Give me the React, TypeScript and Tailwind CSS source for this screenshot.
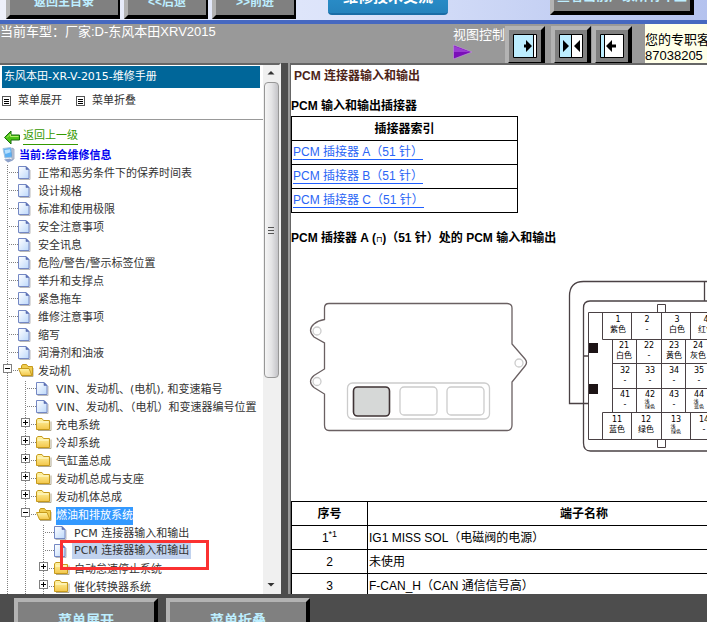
import React from 'react';

interface TreeNode {
  label: string;
  type: 'page' | 'folder' | 'open';
  state?: 'selected' | 'current';
  children?: TreeNode[];
}

interface Pin {
  no: string;
  color: string;
  x: number;
  y: number;
}

const page = (label: string, state?: TreeNode['state']): TreeNode => ({ label, type: 'page', state });
const folder = (label: string): TreeNode => ({ label, type: 'folder' });

const TREE: TreeNode[] = [
  page('正常和恶劣条件下的保养时间表'),
  page('设计规格'),
  page('标准和使用极限'),
  page('安全注意事项'),
  page('安全讯息'),
  page('危险/警告/警示标签位置'),
  page('举升和支撑点'),
  page('紧急拖车'),
  page('维修注意事项'),
  page('缩写'),
  page('润滑剂和油液'),
  {
    label: '发动机',
    type: 'open',
    children: [
      page('VIN、发动机、(电机), 和变速箱号'),
      page('VIN、发动机、（电机）和变速器编号位置'),
      folder('充电系统'),
      folder('冷却系统'),
      folder('气缸盖总成'),
      folder('发动机总成与支座'),
      folder('发动机体总成'),
      {
        label: '燃油和排放系统',
        type: 'open',
        state: 'selected',
        children: [
          page('PCM 连接器输入和输出'),
          page('PCM 连接器输入和输出', 'current'),
          folder('自动怠速停止系统'),
          folder('催化转换器系统'),
        ],
      },
    ],
  },
];

const CONNECTORS = ['PCM 插接器 A（51 针）', 'PCM 插接器 B（51 针）', 'PCM 插接器 C（51 针）'];

const TERMINALS = [
  { no: '1', note: '*1', name: 'IG1 MISS SOL（电磁阀的电源）' },
  { no: '2', name: '未使用' },
  { no: '3', name: 'F-CAN_H（CAN 通信信号高）' },
];

const PINS: Pin[] = [
  { no: '1', color: '紫色', x: 327, y: 60 },
  { no: '2', color: '-', x: 356, y: 60 },
  { no: '3', color: '白色', x: 386, y: 60 },
  { no: '4', color: '红色', x: 415, y: 60 },
  { no: '21', color: '白色', x: 333, y: 86 },
  { no: '22', color: '-', x: 358, y: 86 },
  { no: '23', color: '黄色', x: 383, y: 86 },
  { no: '24', color: '灰色', x: 407, y: 86 },
  { no: '32', color: '-', x: 334, y: 111 },
  { no: '33', color: '-', x: 359, y: 111 },
  { no: '34', color: '-', x: 383, y: 111 },
  { no: '35', color: '-', x: 408, y: 111 },
  { no: '41', color: '-', x: 334, y: 135 },
  { no: '42', color: '浅绿色', x: 359, y: 135 },
  { no: '43', color: '-', x: 383, y: 135 },
  { no: '44', color: '浅蓝色', x: 408, y: 135 },
  { no: '11', color: '蓝色', x: 326, y: 160 },
  { no: '12', color: '绿色', x: 355, y: 160 },
  { no: '13', color: '浅绿色', x: 385, y: 160 },
  { no: '14', color: '-', x: 413, y: 160 },
];

const PageIcon = () => (
  <svg width="16" height="18" viewBox="0 0 16 18" className="shrink-0">
    <defs>
      <linearGradient id="sheet" x1="0" y1="0" x2="1" y2="1">
        <stop offset="0" stopColor="#ffffff" />
        <stop offset="1" stopColor="#bcd8fb" />
      </linearGradient>
    </defs>
    <path d="M1.500 14.500h10.500V5" fill="none" stroke="#b9b9b9" />
    <path d="M.5 1.500H8L11 4.500v9H.5z" fill="url(#sheet)" stroke="#7488c4" />
    <path d="M8 1.500V4.500h3z" fill="#5a6fb4" stroke="#5a6fb4" strokeWidth=".6" />
  </svg>
);

const FolderIcon = ({ open }: { open?: boolean }) => (
  <svg width="18" height="18" viewBox="0 0 18 18" className="shrink-0">
    <defs>
      <linearGradient id="manila" x1="0" y1="0" x2="0" y2="1">
        <stop offset="0" stopColor="#fff6a8" />
        <stop offset="1" stopColor="#f3c64a" />
      </linearGradient>
    </defs>
    {open ? (
      <>
        <path d="M4 13.500h11V5" fill="none" stroke="#b0a890" />
        <path d="M3.500 3l1-1.500h4L10 3.500h4.500v9h-11z" fill="#f0cd50" stroke="#c69a1c" />
        <path d="M.5 5.500h10.500l3 7H3.500z" fill="url(#manila)" stroke="#c69a1c" />
      </>
    ) : (
      <>
        <path d="M2 13.500h13V4.500" fill="none" stroke="#b0a890" />
        <path d="M.5 12.500V3l1.200-1.500H6L7.500 3.500h6v9z" fill="url(#manila)" stroke="#c69a1c" />
        <path d="M1.500 5h11" stroke="#fffbd6" />
      </>
    )}
  </svg>
);

const Rail = ({ branch, box }: { branch?: boolean; box?: 'plus' | 'minus' }) => (
  <svg width="18" height="18" viewBox="0 0 18 18" className="shrink-0">
    <path d="M7.500 0v18" stroke="#808080" strokeDasharray="1 1" />
    {branch && <path d="M9 7.500h9" stroke="#808080" strokeDasharray="1 1" />}
    {box && (
      <>
        <rect x="3.500" y="1.500" width="8" height="8" fill="#fff" stroke="#808080" />
        <path d="M5 5.500h5" stroke="#000" />
        {box === 'plus' && <path d="M7.500 3v5" stroke="#000" />}
      </>
    )}
  </svg>
);

const labelStyles = {
  none: '',
  selected: 'bg-[#3399ff] text-white',
  current: '-mx-0.5 bg-[#c1d2ee] px-0.5 leading-4',
};

const TreeItem: React.FC<{ node: TreeNode; depth: number }> = ({ node, depth }) => {
  const box = node.type === 'open' ? 'minus' : node.type === 'folder' ? 'plus' : undefined;

  return (
    <li>
      <div className="relative flex h-[18px] whitespace-nowrap">
        {Array.from({ length: depth }).map((_, i) => (
          <Rail key={i} />
        ))}
        <Rail branch box={box} />
        <span className="w-5 shrink-0">
          {node.type === 'page' ? <PageIcon /> : <FolderIcon open={node.type === 'open'} />}
        </span>
        <a href="#" className={`self-start ${labelStyles[node.state ?? 'none']}`}>{node.label}</a>
        {node.state === 'current' && (
          <span className="absolute -top-[3px] left-[60px] z-10 h-[30px] w-[149px] border-[3px] border-[#fb3131]" />
        )}
      </div>
      {node.children && (
        <ul>
          {node.children.map((child, i) => (
            <TreeItem key={i} node={child} depth={depth + 1} />
          ))}
        </ul>
      )}
    </li>
  );
};

const MenuIcon = () => (
  <svg width="10" height="10" viewBox="0 0 10 10" className="shrink-0">
    <rect x=".5" y=".5" width="8" height="9" fill="#fff" stroke="#555" />
    <path d="M2 3.500h5M2 5.500h5M2 7.500h5" stroke="#000" />
  </svg>
);

const Scrollbar = () => (
  <div className="flex w-4 shrink-0 flex-col items-center bg-[#f0f0f0] text-black">
    <svg width="16" height="17" viewBox="0 0 16 17">
      <path d="M4.500 9.500L8 6l3.500 3.500z" fill="#333" />
    </svg>
    <div className="flex h-[296px] w-[15px] items-center justify-center rounded-sm border border-[#979797] bg-linear-to-r from-[#f5f5f5] via-[#e4e4e6] to-[#c4c4c8]">
      <svg width="8" height="8" viewBox="0 0 8 8">
        <path d="M1 1.500h6M1 4.500h6M1 7.500h6" stroke="#555" />
      </svg>
    </div>
    <svg width="16" height="17" viewBox="0 0 16 17" className="mt-auto">
      <path d="M4.500 6L8 9.500 11.500 6z" fill="#333" />
    </svg>
  </div>
);

const Sidebar = () => (
  <aside className="flex w-[281px] shrink-0 border-t-2 border-r-2 border-t-[#666] border-r-[#f0f0f0] bg-white font-['DejaVu_Sans','Noto_Sans_CJK_SC',sans-serif] text-[11px] leading-[18px] text-[#333]">
    <div className="min-w-0 flex-1 overflow-hidden">
      <h1 className="mt-px mr-[3px] ml-0.5 h-[22px] bg-[#069] px-0.5 leading-[22px] text-white">东风本田-XR-V-2015-维修手册</h1>
      <div className="flex h-8 items-center gap-3.5 border-b border-[#999] pb-1.5 pl-0.5">
        <a href="#" className="flex items-center gap-1.5"><MenuIcon />菜单展开</a>
        <a href="#" className="flex items-center gap-1.5"><MenuIcon />菜单折叠</a>
      </div>
      <div className="flex h-[25px] items-end pl-1">
        <svg width="19" height="16" viewBox="0 0 19 16">
          <path d="M.5 8.500L7 2v4h8.500v5H7v4z" fill="#4cc417" stroke="#176b0c" />
          <path d="M3 8.500L6.500 5v2.500h8" fill="none" stroke="#b5ef6b" />
        </svg>
        <a href="#" className="border-b border-[#390] leading-4 text-[#390]">返回上一级</a>
      </div>
      <div className="mt-0.5 flex h-[18px] pl-0.5 font-bold text-[#0000f0]">
        <svg width="17" height="18" viewBox="0 0 17 18">
          <path d="M1 1.500l8-1 2 9.500-8 1z" fill="#5cb0f3" stroke="#a8c4de" />
          <path d="M2.500 3l5.500-.7.6 3-5.100 1.700z" fill="#b5e0ff" />
          <path d="M10 1l2 1v10l-2 1z" fill="#c8cfdd" stroke="#8593b0" strokeWidth=".7" />
          <path d="M2 12.500l6-1 3 2-5 2z" fill="#8ea1c9" />
        </svg>
        当前:综合维修信息
      </div>
      <ul>
        {TREE.map((node, i) => (
          <TreeItem key={i} node={node} depth={0} />
        ))}
      </ul>
    </div>
    <Scrollbar />
  </aside>
);

const PinLabel = ({ pin }: { pin: Pin }) => (
  <>
    <text x={pin.x} y={pin.y}>{pin.no}</text>
    {pin.color.length === 3 ? (
      <g fontSize="5">
        <text x={pin.x - 3} y={pin.y + 6}>{pin.color.slice(0, 1)}</text>
        <text x={pin.x} y={pin.y + 11}>{pin.color.slice(1)}</text>
      </g>
    ) : (
      <text x={pin.x} y={pin.y + 10}>{pin.color}</text>
    )}
  </>
);

const PcmDiagram = () => (
  <svg width="510" height="239" viewBox="0 0 510 239" className="block font-['DejaVu_Sans','Noto_Sans_CJK_SC',sans-serif]">
    <g fill="none" stroke="#6a6062" strokeWidth="1.300">
      <path d="M33.500 51.500V46q0-4.500 4.500-4.500h178q5 0 5 4.500v36l13 15q3 3.500 0 7l-13 16v43q0 5.500-5 5.500H38q-4.500 0-4.500-5.500v-31l-10.500-6.500q-7-6 0-12L33.500 107V81l-10.500-6q-7-7 0-13 4-3.500 10.500-4.500z" />
      <g stroke="#ccc">
        <circle cx="26" cy="69" r="4" />
        <circle cx="26" cy="119.500" r="4" />
        <circle cx="228" cy="101" r="4" />
        <rect x="56.500" y="121" width="142" height="36" rx="5" />
        <rect x="109" y="125" width="37" height="28" rx="4" />
        <rect x="156" y="125" width="37" height="28" rx="4" />
      </g>
      <rect x="62.500" y="125" width="36" height="29" rx="4" fill="#d6d8d7" stroke="#3f3335" strokeWidth="1.600" />
    </g>
    <g fill="none" stroke="#4a4144">
      <path d="M297 141.500H278.500V34q0-14.500 14-14.500H510M413.500 19v20" strokeWidth="1.300" />
      <path d="M510 39H299q-6.500 0-6.500 7v135q0 8 7 8H510M293 94h5" strokeWidth="1.300" />
      <path d="M510 50.500H297.500v127H510M366.500 50.500v-8h8v8M366.500 177.500v8h8v-8" />
      <path d="M311.500 50.500v27H510M340.500 50.500v27M370.500 50.500v27M399.500 50.500v27" />
      <path d="M321.500 77.500v73M345.500 77.500v73M370.500 77.500v73M394.500 77.500v73M321.500 101.500H510M321.500 126.500H510" />
      <path d="M510 150.500H311.500v27M340.500 150.500v27M370.500 150.500v27M399.500 150.500v27" />
    </g>
    <path d="M298 81h9v10h-9zM298 122h9v10h-9z" fill="#1c1315" />
    <g fill="#000" fontSize="8" textAnchor="middle">
      {PINS.map((pin) => (
        <PinLabel key={pin.no} pin={pin} />
      ))}
    </g>
  </svg>
);

const Content = () => (
  <main className="min-w-0 flex-1 overflow-hidden border-t-2 border-l border-[#666] bg-white text-xs text-black">
    <h2 className="mt-0.5 h-[18px] pl-[3px] leading-[18px] font-bold text-[#4d2418]">PCM 连接器输入和输出</h2>
    <h3 className="mt-[11px] h-5 leading-5 font-bold">PCM 输入和输出插接器</h3>
    <table className="w-[227px] border-collapse">
      <thead>
        <tr className="h-6">
          <th className="border border-black p-0">插接器索引</th>
        </tr>
      </thead>
      <tbody>
        {CONNECTORS.map((name) => (
          <tr key={name} className="h-6">
            <td className="border border-black p-0 pl-px leading-[14px]">
              <a href="#" className="inline-block border-b border-[#1f5fff] text-[#2b65f5]">{name}</a>
            </td>
          </tr>
        ))}
      </tbody>
    </table>
    <h3 className="mt-[15px] mb-3.5 h-5 leading-5 font-bold whitespace-nowrap">
      PCM 插接器 A (<span className="font-['DejaVu_Sans'] text-[8px] font-normal">⊓</span>)（51 针）处的 PCM 输入和输出
    </h3>
    <PcmDiagram />
    <table className="w-[510px] table-fixed border-collapse">
      <thead>
        <tr className="h-6">
          <th className="w-[76px] border border-black p-0">序号</th>
          <th className="border border-black p-0">端子名称</th>
        </tr>
      </thead>
      <tbody>
        {TERMINALS.map((row) => (
          <tr key={row.no} className="h-6">
            <td className="border border-black p-0 text-center">
              {row.no}
              {row.note && <sup className="text-[9px]">{row.note}</sup>}
            </td>
            <td className="border border-black p-0 pl-px">{row.name}</td>
          </tr>
        ))}
      </tbody>
    </table>
  </main>
);

const bevel = 'shrink-0 border-4 border-t-[#b3b3b3] border-r-black border-b-black border-l-[#b3b3b3] bg-[#808080] font-bold whitespace-nowrap text-[#bdeeff]';

const ViewButton = ({ label, children }: { label: string; children: React.ReactNode }) => (
  <button aria-label={label} className={`${bevel} mt-0.5 flex h-10 w-10 items-center justify-center`}>
    <svg width="24" height="24" viewBox="0 0 24 24" className="shrink-0">{children}</svg>
  </button>
);

const TopBar = () => (
  <header className="flex h-6 shrink-0 items-end overflow-hidden border-b-4 border-[#4668c0] bg-linear-to-r from-[#eef0fa] via-[#dbe3fa] to-[#b4c2ee] pb-px pl-1.5">
    <button className={`${bevel} h-10 w-[114px] border-r-2 pt-1.5 text-xs`}>返回主目录</button>
    <button className={`${bevel} ml-1 h-10 w-[84px] border-r-2 pt-1.5 text-xs`}>&lt;&lt;后退</button>
    <button className={`${bevel} ml-1 h-10 w-[84px] border-r-2 pt-1.5 text-xs`}>&gt;&gt;前进</button>
    <button className="mb-1 ml-8 h-9 w-30 shrink-0 rounded-sm border-b-2 border-[#1a6da6] bg-linear-to-b from-[#2f98d4] to-[#2583bd] pt-0.5 text-[15px] font-bold text-white">维修技术交流</button>
    <button className={`${bevel} mb-1 ml-auto mr-[13px] h-10 w-36 pt-0.5 text-[13px]`}>查看当前厂家所有车型</button>
  </header>
);

const StatusBar = () => (
  <section className="flex h-[39px] shrink-0 overflow-hidden bg-[#999] text-[13px] text-white">
    <p className="min-w-0 flex-1 leading-4 whitespace-nowrap">当前车型：厂家:D-东风本田XRV2015</p>
    <div className="w-13 shrink-0">
      <p className="h-5 leading-[22px]">视图控制</p>
      <svg width="20" height="16" viewBox="0 0 20 16">
        <path d="M.5 1L19 8 .5 15z" fill="#7a10b8" stroke="#c79be0" strokeWidth=".6" />
        <path d="M1 2l16 6H1z" fill="#9a3bd2" />
      </svg>
    </div>
    <ViewButton label="左侧视图">
      <path d="M.5 .5h23v23H.5z" fill="#fff" stroke="#000" />
      <path d="M1 1h19v22H1z" fill="#bdeeff" />
      <path d="M20.500 1v22" stroke="#000" />
      <path d="M11 10.500h2V6l6 6-6 6v-4.500h-2z" />
    </ViewButton>
    <div className="ml-1.5 flex shrink-0 gap-px">
      <ViewButton label="双栏视图">
        <path d="M.5 .5h23v23H.5z" fill="#fff" stroke="#000" />
        <path d="M1 1h11v22H1z" fill="#bdeeff" />
        <path d="M12.500 1v22" stroke="#000" />
        <path d="M4 6v12l6-6zM21 6v12l-6-6z" />
      </ViewButton>
      <ViewButton label="右侧视图">
        <path d="M.5 .5h23v23H.5z" fill="#fff" stroke="#000" />
        <path d="M1 1h3v22H1z" fill="#bdeeff" />
        <path d="M4.500 1v22" stroke="#000" />
        <path d="M16 10.500h-4V6l-6 6 6 6v-4.500h4z" />
      </ViewButton>
    </div>
    <div className="ml-[13px] w-[62px] shrink-0 overflow-hidden bg-[#ffffe8] pt-2 whitespace-nowrap text-black">
      <p className="leading-4">您的专职客服</p>
      <p className="leading-4">87038205</p>
    </div>
  </section>
);

export default function App() {
  return (
    <div className="flex h-screen flex-col overflow-hidden bg-[#4d4d4d] font-['Liberation_Sans','Noto_Sans_CJK_SC',sans-serif]">
      <TopBar />
      <StatusBar />
      <div className="flex min-h-0 flex-1 overflow-hidden">
        <Sidebar />
        <div className="w-[9px] shrink-0 border-r-2 border-[#999]" />
        <Content />
      </div>
      <footer className="flex h-7 shrink-0 gap-2 overflow-hidden pt-1 pl-3.5">
        <button className={`${bevel} h-11 w-36 text-sm`}>菜单展开</button>
        <button className={`${bevel} h-11 w-36 text-sm`}>菜单折叠</button>
      </footer>
    </div>
  );
}
